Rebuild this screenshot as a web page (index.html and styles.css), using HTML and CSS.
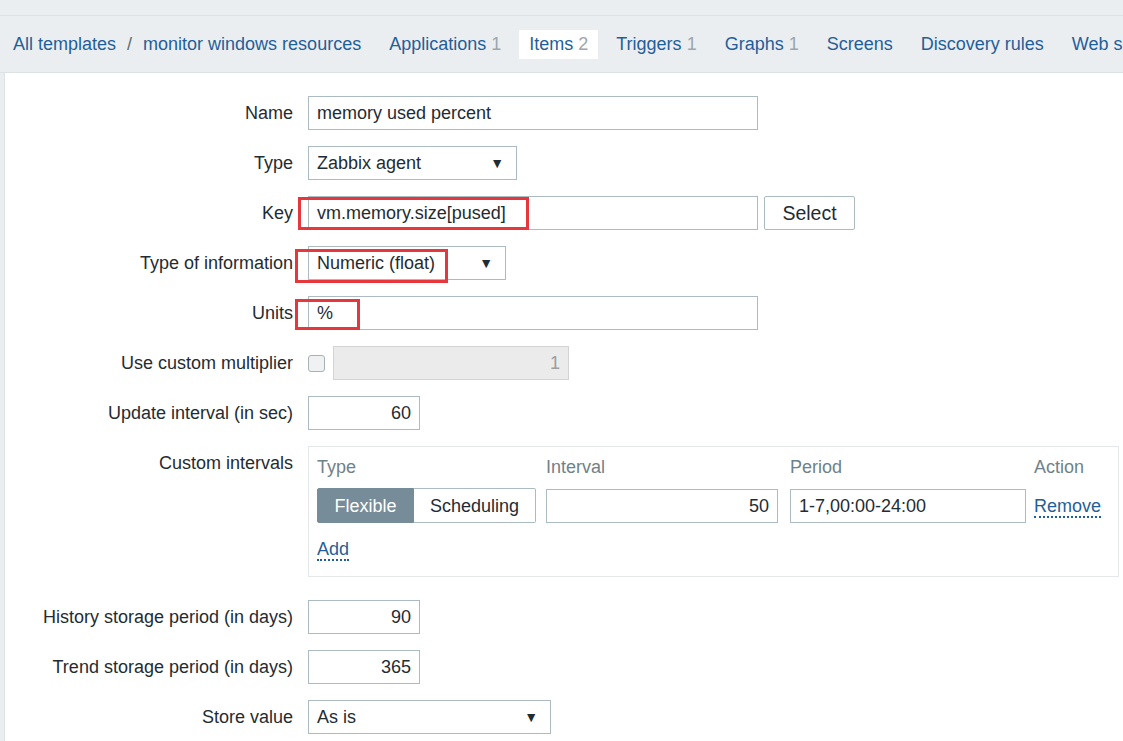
FILE: index.html
```html
<!DOCTYPE html>
<html>
<head>
<meta charset="utf-8">
<link rel="stylesheet" href="styles.css">
</head>
<body>
<div class="topbar"></div>
<nav class="nav">
  <a class="link">All templates</a>
  <span class="sep">/</span>
  <a class="link">monitor windows resources</a>
  <span class="tab first"><a class="link">Applications</a> <span class="count">1</span></span>
  <span class="tab active"><span class="curr">Items</span> <span class="count">2</span></span>
  <span class="tab"><a class="link">Triggers</a> <span class="count">1</span></span>
  <span class="tab"><a class="link">Graphs</a> <span class="count">1</span></span>
  <span class="tab"><a class="link">Screens</a></span>
  <span class="tab"><a class="link">Discovery rules</a></span>
  <span class="tab"><a class="link">Web scenarios</a></span>
</nav>
<main class="panel">
  <div class="form">
    <div class="row">
      <label class="lbl">Name</label>
      <div class="field"><div class="input w-long">memory used percent</div></div>
    </div>
    <div class="row">
      <label class="lbl">Type</label>
      <div class="field"><div class="select w-type"><span>Zabbix agent</span><span class="arrow">▼</span></div></div>
    </div>
    <div class="row">
      <label class="lbl">Key</label>
      <div class="field">
        <div class="input w-long">vm.memory.size[pused]</div>
        <button class="btn">Select</button>
        <span class="mark mark-key"></span>
      </div>
    </div>
    <div class="row">
      <label class="lbl">Type of information</label>
      <div class="field">
        <div class="select w-info"><span>Numeric (float)</span><span class="arrow">▼</span></div>
        <span class="mark mark-info"></span>
      </div>
    </div>
    <div class="row">
      <label class="lbl">Units</label>
      <div class="field">
        <div class="input w-long">%</div>
        <span class="mark mark-units"></span>
      </div>
    </div>
    <div class="row">
      <label class="lbl">Use custom multiplier</label>
      <div class="field">
        <span class="checkbox"></span>
        <div class="input disabled w-mult num">1</div>
      </div>
    </div>
    <div class="row">
      <label class="lbl">Update interval (in sec)</label>
      <div class="field"><div class="input w-num num">60</div></div>
    </div>
    <div class="row row-box">
      <label class="lbl">Custom intervals</label>
      <div class="field">
        <div class="box">
          <div class="grid">
            <div class="th">Type</div>
            <div class="th">Interval</div>
            <div class="th">Period</div>
            <div class="th">Action</div>
            <div class="seg"><span class="seg-on">Flexible</span><span class="seg-off">Scheduling</span></div>
            <div class="input num w-interval">50</div>
            <div class="input w-period">1-7,00:00-24:00</div>
            <a class="link dotted">Remove</a>
          </div>
          <a class="link dotted add">Add</a>
        </div>
      </div>
    </div>
    <div class="row">
      <label class="lbl">History storage period (in days)</label>
      <div class="field"><div class="input w-num num">90</div></div>
    </div>
    <div class="row">
      <label class="lbl">Trend storage period (in days)</label>
      <div class="field"><div class="input w-num num">365</div></div>
    </div>
    <div class="row">
      <label class="lbl">Store value</label>
      <div class="field"><div class="select w-store"><span>As is</span><span class="arrow">▼</span></div></div>
    </div>
  </div>
</main>
</body>
</html>
```

FILE: styles.css
```css
* { box-sizing: border-box; }
html, body { margin: 0; padding: 0; }
body {
  background: #ebeef0;
  font-family: "Liberation Sans", Arial, sans-serif;
  font-size: 18px;
  color: #1f2c33;
  width: 1123px;
  height: 741px;
  overflow: hidden;
}
.topbar {
  height: 16px;
  border-bottom: 1px solid #dde2e5;
  background: #ebeef0;
}
.nav {
  height: 57px;
  display: flex;
  align-items: center;
  white-space: nowrap;
  padding-left: 13px;
  border-bottom: 1px solid #dde2e5;
  padding-top: 1px;
  overflow: hidden;
}
.link { color: #1f5f99; text-decoration: none; }
.sep { color: #5a6c76; margin: 0 11px; }
.tab {
  display: inline-flex;
  align-items: center;
  height: 29px;
  padding: 0 10px;
  margin-left: 8px;
  flex-shrink: 0;
}
.tab.first { margin-left: 18px; }
.tab.active { background: #ffffff; }
.curr { color: #1f5f99; }
.count { color: #9aa7ae; margin-left: 5px; }

.panel {
  margin-left: 4px;
  background: #ffffff;
  border-left: 1px solid #dde2e5;
  height: 700px;
  padding-top: 23px;
}
.form { display: flex; flex-direction: column; gap: 16px; }
.row {
  display: grid;
  grid-template-columns: 288px 1fr;
  column-gap: 15px;
  align-items: start;
}
.row-box { margin-bottom: 7px; }
.lbl {
  text-align: right;
  line-height: 35px;
  height: 34px;
  white-space: nowrap;
}
.field {
  position: relative;
  display: flex;
  align-items: center;
  gap: 6px;
}
.input, .select {
  height: 34px;
  border: 1px solid #acbbc2;
  background: #fff;
  line-height: 33px;
  padding: 0 8px;
  white-space: nowrap;
}
.num { text-align: right; }
.w-long { width: 450px; }
.w-num { width: 112px; }
.w-mult { width: 236px; }
.w-type { width: 209px; }
.w-info { width: 198px; }
.w-store { width: 243px; }
.select {
  display: flex;
  justify-content: space-between;
  align-items: center;
  padding-right: 12px;
}
.arrow { font-size: 14px; color: #1f2c33; }
.btn {
  height: 34px;
  width: 91px;
  border: 1px solid #acbbc2;
  border-radius: 2px;
  background: #fff;
  font: inherit;
  font-size: 19.5px;
  color: #1f2c33;
  padding: 0;
}
.disabled {
  background: #ebebeb;
  border-color: #d3d3d3;
  color: #9d9d9d;
  margin-left: 2px;
}
.checkbox {
  width: 17px;
  height: 17px;
  border: 1px solid #a7b2b8;
  border-radius: 3px;
  background: #f0f1f2;
}
.mark {
  position: absolute;
  border: 3px solid #e5373c;
  pointer-events: none;
}
.mark-key { left: -10px; top: 1px; width: 231px; height: 33px; }
.mark-info { left: -13px; top: 3px; width: 153px; height: 34px; }
.mark-units { left: -13px; top: 3px; width: 65px; height: 31px; }

.box {
  width: 811px;
  height: 131px;
  border: 1px solid #e4e8ea;
  padding: 0 8px;
}
.grid {
  display: grid;
  grid-template-columns: 229px 244px 244px auto;
  align-items: center;
}
.grid .th {
  color: #6f8189;
  height: 39px;
  line-height: 41px;
}
.grid .w-interval { width: 232px; }
.grid .w-period { width: 236px; }
.grid .input { margin-top: 2px; }
.seg { display: flex; height: 35px; margin-top: 2px; }
.seg-on {
  width: 97px;
  background: #768d99;
  color: #fff;
  border: 1px solid #768d99;
  border-radius: 2px 0 0 2px;
  text-align: center;
  line-height: 34px;
}
.seg-off {
  width: 122px;
  background: #fff;
  border: 1px solid #acbbc2;
  border-left: none;
  border-radius: 0 2px 2px 0;
  text-align: center;
  line-height: 34px;
}
.dotted {
  border-bottom: 2px dotted #1f5f99;
  line-height: 20px;
  justify-self: start;
  margin-top: 4px;
}
.add { display: inline-block; margin-top: 16px; }
```
